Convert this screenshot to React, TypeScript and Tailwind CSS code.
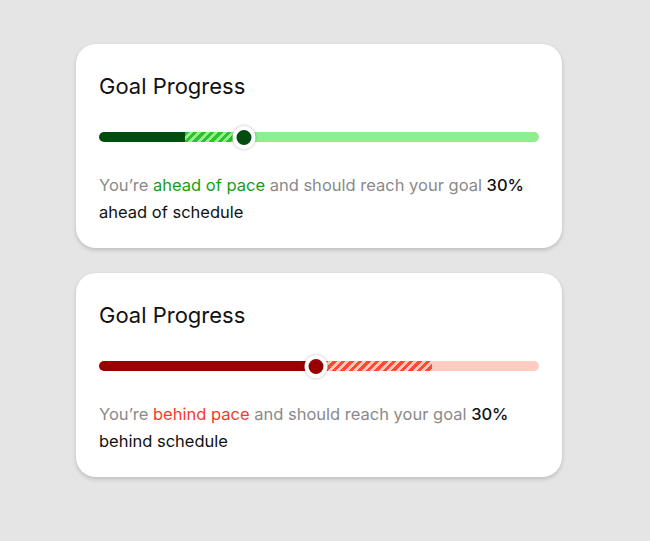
import React from 'react';

type Segment = { className: string; width: string };

type GoalCardProps = {
  segments: Segment[];
  thumbLeft: string;
  thumbColor: string;
  status: string;
  statusColor: string;
  schedule: string;
};

function GoalCard({ segments, thumbLeft, thumbColor, status, statusColor, schedule }: GoalCardProps) {
  return (
    <div className="w-[486px] h-[204px] rounded-[20px] bg-white px-[23px] pt-[28px] shadow-[0_2px_4px_rgba(0,0,0,0.18)]">
      <h2 className="text-[22px] leading-[28px] text-[#111]">Goal Progress</h2>

      {/* Progress track */}
      <div className="relative mt-[26px] flex h-[22px] items-center">
        <div className="flex h-[10px] w-full overflow-hidden rounded-full">
          {segments.map((s, i) => (
            <div key={i} className={`h-full ${s.className} ${s.width}`} />
          ))}
        </div>
        <div
          className={`absolute top-[-0.5px] h-[23px] w-[23px] -translate-x-1/2 rounded-full border-[4px] border-white shadow-[0_0_3px_rgba(0,0,0,0.3)] ${thumbColor} ${thumbLeft}`}
        />
      </div>

      <p className="mt-[24px] text-[16.5px] leading-[27px] text-[#8a8a8a]">
        You’re <span className={statusColor}>{status}</span> and should reach your goal{' '}
        <span className="font-medium text-[#111]">30%</span>
        <span className="text-[#111]"> {schedule}</span>
      </p>
    </div>
  );
}

export default function App() {
  return (
    <main
      className="min-h-[541px] w-[650px] bg-[#e5e5e5] pl-[76px] pt-[44px]"
      style={{ fontFamily: 'Inter, "Noto Sans", sans-serif' }}
    >
      <div className="flex flex-col gap-[25px]">
        <GoalCard
          segments={[
            { className: 'bg-[#004d0f]', width: 'w-[19.5%]' },
            {
              className:
                'bg-[repeating-linear-gradient(135deg,#2fbf2f_0px,#2fbf2f_3px,#90ee90_3px,#90ee90_6px)]',
              width: 'w-[14%]',
            },
            { className: 'bg-[#90ee90]', width: 'flex-1' },
          ]}
          thumbLeft="left-[32.9%]"
          thumbColor="bg-[#004d0f]"
          status="ahead of pace"
          statusColor="text-[#14a014]"
          schedule="ahead of schedule"
        />
        <GoalCard
          segments={[
            { className: 'bg-[#990000]', width: 'w-[49.4%]' },
            {
              className:
                'bg-[repeating-linear-gradient(135deg,#ff4a33_0px,#ff4a33_3px,#ffc8bd_3px,#ffc8bd_6px)]',
              width: 'w-[26.2%]',
            },
            { className: 'bg-[#ffccc2]', width: 'flex-1' },
          ]}
          thumbLeft="left-[49.4%]"
          thumbColor="bg-[#990000]"
          status="behind pace"
          statusColor="text-[#f53b2a]"
          schedule="behind schedule"
        />
      </div>
    </main>
  );
}
